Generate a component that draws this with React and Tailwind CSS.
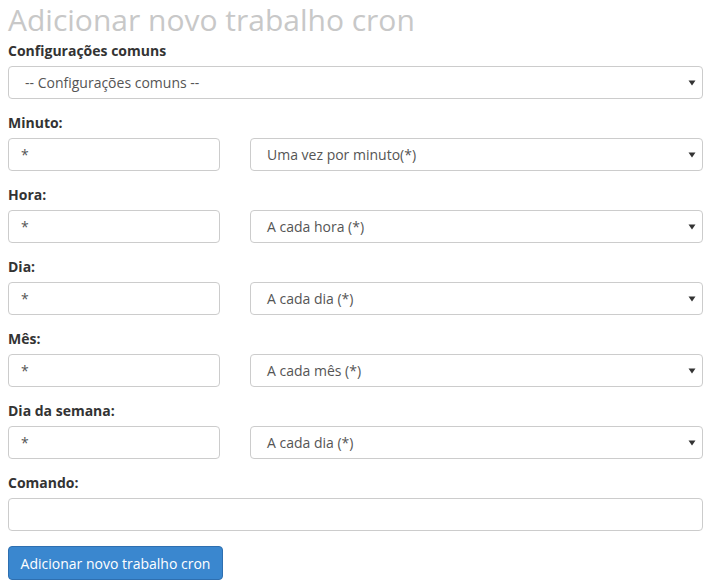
const rows = [
  { label: "Minuto:", value: "*", option: "Uma vez por minuto(*)" },
  { label: "Hora:", value: "*", option: "A cada hora (*)" },
  { label: "Dia:", value: "*", option: "A cada dia (*)" },
  { label: "Mês:", value: "*", option: "A cada mês (*)" },
  { label: "Dia da semana:", value: "*", option: "A cada dia (*)" },
];

function Select({ text, className }) {
  return (
    <div
      className={
        "relative h-[33px] border border-[#cccccc] rounded bg-white flex items-center pl-4 text-[14px] text-[#555555] " +
        className
      }
    >
      <span>{text}</span>
      <svg
        width="8"
        height="6"
        viewBox="0 0 8 6"
        className="absolute right-[6px] top-[13px]"
      >
        <path d="M0.5 0.5 H7.5 L4 5.5 Z" fill="#333333" />
      </svg>
    </div>
  );
}

function Input({ value, className }) {
  return (
    <div
      className={
        "h-[33px] border border-[#cccccc] rounded bg-white flex items-center px-3 text-[14px] text-[#555555] " +
        className
      }
    >
      {value}
    </div>
  );
}

function Label({ children }) {
  return (
    <div className="h-5 leading-5 text-[14px] font-bold text-[#333333] mb-[5px]">
      {children}
    </div>
  );
}

export default function App() {
  return (
    <div
      className="w-[715px] h-[583px] bg-white px-2 overflow-hidden"
      style={{ fontFamily: '"Open Sans", sans-serif' }}
    >
      <h1 className="h-[41px] leading-[39px] text-[30px] text-[#c8c8c8] font-normal">
        Adicionar novo trabalho cron
      </h1>

      <div className="mb-[14px]">
        <Label>Configurações comuns</Label>
        <Select text="-- Configurações comuns --" className="w-[695px]" />
      </div>

      {rows.map((r) => (
        <div key={r.label} className="mb-[14px]">
          <Label>{r.label}</Label>
          <div className="flex gap-[30px]">
            <Input value={r.value} className="w-[212px]" />
            <Select text={r.option} className="w-[453px]" />
          </div>
        </div>
      ))}

      <div className="mb-[15px]">
        <Label>Comando:</Label>
        <Input value="" className="w-[695px]" />
      </div>

      <button className="h-[34px] w-[215px] bg-[#3a87cf] border border-[#2e6fb0] rounded text-white text-[14px]">
        Adicionar novo trabalho cron
      </button>
    </div>
  );
}
